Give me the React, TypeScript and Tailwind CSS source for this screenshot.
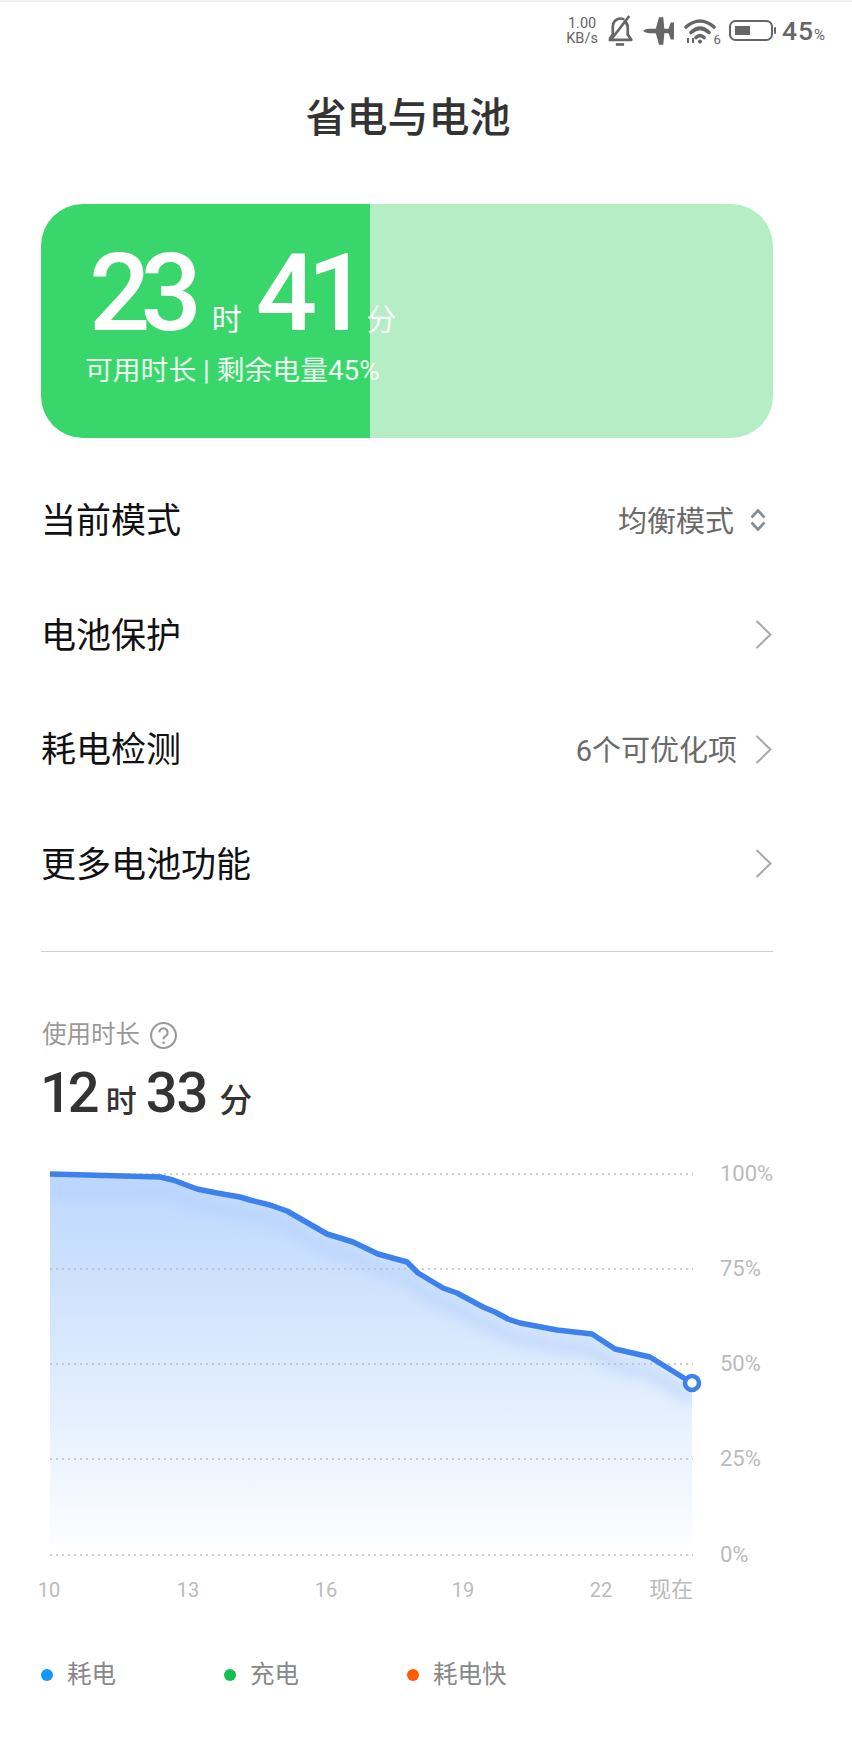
const CJK = '"Noto Sans CJK SC", sans-serif';

const LINE: [number, number][] = [
  [50, 1174], [160, 1177], [173, 1180], [197, 1189], [217, 1193], [240, 1197], [250, 1200],
  [270, 1205], [287, 1211], [327, 1234], [353, 1242], [378, 1254], [407, 1262], [418, 1273],
  [443, 1288], [457, 1293], [483, 1307], [495, 1312], [508, 1319], [520, 1323], [557, 1330],
  [592, 1334], [615, 1349], [650, 1357], [692, 1383],
];
const linePath = LINE.map(([x, y], i) => `${i ? "L" : "M"}${x} ${y}`).join(" ");
const areaPath = `${linePath} L692 1545 L50 1545 Z`;
const shadowPath = LINE.map(([x, y], i) => `${i ? "L" : "M"}${x} ${y + 16}`).join(" ");

function StatusBar() {
  return (
    <div className="h-[60px] border-t-2 border-[#f0f0f0] flex items-center justify-end pr-[27px] pb-[1px] text-[#666]">
      <div className="flex flex-col items-center text-[14.500px] leading-[15px] font-['Roboto'] mr-[8px]">
        <span>1.00</span>
        <span>KB/s</span>
      </div>
      <svg width="28" height="31" viewBox="0 0 26 30" fill="none" stroke="#666" strokeWidth="2.600" className="mr-[9px]">
        <path d="M2 24h22l-3.500-5V12c0-3-1.500-5-3.500-6.500M17 4.500C13 2 6 4 6 12v7l-3 4" strokeLinejoin="round" />
        <path d="M22 1L5 23" />
        <path d="M9 28.500h8" />
      </svg>
      <svg width="32" height="28" viewBox="0 0 30 26" fill="#666" className="mr-[9px]">
        <path d="M0 13Q2 11 6 11H28Q30 13 28 15H6Q2 15 0 13z" />
        <path d="M12 11L15 0h4l1 11v4l-1 11h-4l-3-11z" />
        <path d="M24 11l2-6h3v16h-3l-2-6z" />
      </svg>
      <div className="relative w-[36px] h-[26px] mr-[9px]">
        <svg width="34" height="26" viewBox="0 0 34 26" fill="none" stroke="#666" strokeWidth="3.600" strokeLinecap="round">
          <path d="M2 9Q16-3 30 9" />
          <path d="M7 14.500Q16 6 25 14.500" />
          <path d="M12 19.500Q16 15.500 20 19.500" />
          <circle cx="16" cy="23.500" r="2" fill="#666" stroke="none" />
          <path d="M4 25v-5M9 25v-5" strokeWidth="2" strokeLinecap="butt" />
        </svg>
        <span className="absolute right-[-1px] bottom-[-3px] text-[13px] leading-[14px] font-['Roboto']">6</span>
      </div>
      <svg width="47" height="22" viewBox="0 0 47 22" fill="none" className="mr-[6px]">
        <rect x="1" y="1" width="42" height="19" rx="5.500" stroke="#666" strokeWidth="2" />
        <rect x="6" y="6" width="15" height="9" fill="#666" />
        <rect x="45" y="7" width="2" height="7" rx="1" fill="#666" />
      </svg>
      <span className="text-[26.500px] leading-[30px] font-medium tracking-[1px] font-['Roboto']">45</span>
      <span className="text-[15px] leading-[14px] mt-[8px] font-['Roboto']">%</span>
    </div>
  );
}

function Chevron() {
  return (
    <svg width="17" height="29" viewBox="0 0 17 29" fill="none" stroke="#a8a8a8" strokeWidth="2" className="ml-[18px] mr-[1px]">
      <path d="M1.500 1l14 13.500-14 13.500" />
    </svg>
  );
}

function Row({ label, value, updown }: { label: string; value?: string; updown?: boolean }) {
  return (
    <div className="h-[114.500px] flex items-center justify-between">
      <span className="text-[35px] leading-[46px] text-[#111] mt-[4px]">{label}</span>
      <div className="flex items-center">
        {value && <span className="text-[#6a6a6a] leading-[40px] text-[29px] mt-[3px]">{value}</span>}
        {updown ? (
          <svg width="16" height="24" viewBox="0 0 16 24" fill="none" stroke="#858ca3" strokeWidth="2.600" className="ml-[16px] mr-[7px]">
            <path d="M1.500 9.500L8 2.500l6.500 7M1.500 14.500L8 21.500l6.500-7" />
          </svg>
        ) : (
          <Chevron />
        )}
      </div>
    </div>
  );
}

function Chart() {
  const grid = [
    [1174, "100%"],
    [1269, "75%"],
    [1364, "50%"],
    [1459, "25%"],
    [1555, "0%"],
  ] as const;
  const ticks = [
    [49, "10"],
    [188, "13"],
    [326, "16"],
    [463, "19"],
    [601, "22"],
  ] as const;
  return (
    <svg width="852" height="470" viewBox="0 1150 852 470" className="block mt-[25px]">
      <defs>
        <linearGradient id="fill" gradientUnits="userSpaceOnUse" x1="0" y1="1174" x2="0" y2="1545">
          <stop offset="0" stopColor="#bdd7fe" />
          <stop offset="0.45" stopColor="#d8e8fd" />
          <stop offset="1" stopColor="#fcfdff" />
        </linearGradient>
        <clipPath id="area">
          <path d={areaPath} />
        </clipPath>
        <filter id="soft" x="-5%" y="-20%" width="110%" height="140%">
          <feGaussianBlur stdDeviation="6" />
        </filter>
      </defs>
      <path d={areaPath} fill="url(#fill)" />
      <g clipPath="url(#area)">
        <path d={shadowPath} fill="none" stroke="#b4d0fb" strokeOpacity="0.5" strokeWidth="14" filter="url(#soft)" />
      </g>
      {grid.map(([y, label]) => (
        <g key={label}>
          <line x1="50" x2="693" y1={y} y2={y} stroke="#bdbdbd" strokeWidth="1.500" strokeDasharray="2 4" />
          <text x="720" y={y + 7} fontSize="22" fill="#bbbbbb" fontFamily="Roboto">{label}</text>
        </g>
      ))}
      <path d={linePath} fill="none" stroke="#3d82ec" strokeWidth="5.500" strokeLinejoin="round" />
      <circle cx="692" cy="1383" r="7" fill="#fff" stroke="#3d82ec" strokeWidth="4.500" />
      {ticks.map(([x, label]) => (
        <text key={label} x={x} y="1597" textAnchor="middle" fontSize="20" fill="#bbbbbb" fontFamily="Roboto">{label}</text>
      ))}
      <text x="649" y="1597" fontSize="22" fill="#bbbbbb" fontFamily={CJK}>现在</text>
    </svg>
  );
}

export default function App() {
  return (
    <div className="w-[852px] h-[1740px] bg-white overflow-hidden font-['Roboto','Noto_Sans_CJK_SC',sans-serif]">
      <StatusBar />
      <h1 className="mt-[30px] h-[56px] w-[816px] text-center text-[41px] leading-[56px] font-medium text-[#333]">省电与电池</h1>

      <div className="ml-[41px] mr-[79px] mt-[58px] h-[234px] rounded-[42px] pl-[44px] pt-[36px] text-white bg-[linear-gradient(90deg,#39d66b_329px,#b5eec5_329px)]">
        <div className="flex items-baseline h-[106px] leading-[106px]">
          <span className="text-[108px] font-medium tracking-[-10px] ml-[4px]">23</span>
          <span className="text-[30px] ml-[20px] mr-[14px]">时</span>
          <span className="text-[108px] font-medium tracking-[-10px]">41</span>
          <span className="text-[30px] ml-[8px] opacity-90">分</span>
        </div>
        <p className="text-[27.800px] leading-[36px] mt-[7px] text-white/90">可用时长 | 剩余电量45%</p>
      </div>

      <div className="ml-[41px] mr-[79px] mt-[25px]">
        <Row label="当前模式" value="均衡模式" updown />
        <Row label="电池保护" />
        <Row label="耗电检测" value="6个可优化项" />
        <Row label="更多电池功能" />
      </div>

      <div className="ml-[41px] mr-[79px] mt-[30px] border-t border-[#cfcfcf]" />

      <div className="ml-[42px] mt-[68px] flex items-center h-[30px] text-[24.500px] leading-[30px] text-[#999]">
        使用时长
        <svg width="29" height="29" viewBox="0 0 28 28" fill="none" stroke="#999" strokeWidth="2" className="ml-[9px]">
          <circle cx="14" cy="14" r="12" />
          <path d="M10 11a4 4 0 1 1 6.500 3.200c-1.500 1-2.500 1.800-2.500 3.300" />
          <circle cx="14" cy="21" r="1.300" fill="#999" stroke="none" />
        </svg>
      </div>

      <div className="ml-[40px] mt-[11px] flex items-baseline h-[64px] leading-[64px] text-[#333]">
        <span className="text-[56px] font-medium tracking-[-4px]">12</span>
        <span className="text-[31px] ml-[10px] font-medium">时</span>
        <span className="text-[56px] font-medium tracking-[-1px] ml-[9px]">33</span>
        <span className="text-[33px] ml-[12px] font-medium">分</span>
      </div>

      <Chart />

      <div className="ml-[41px] mt-[39px] flex text-[24.500px] leading-[32px] text-[#888]">
        {[
          ["耗电", "bg-[#1296ff]"],
          ["充电", "bg-[#0fc24f]"],
          ["耗电快", "bg-[#ff5a0a]"],
        ].map(([label, dot]) => (
          <div key={label} className="w-[183px] flex items-center">
            <span className={`w-[12px] h-[12px] rounded-full ${dot}`} />
            <span className="ml-[14px]">{label}</span>
          </div>
        ))}
      </div>
    </div>
  );
}
